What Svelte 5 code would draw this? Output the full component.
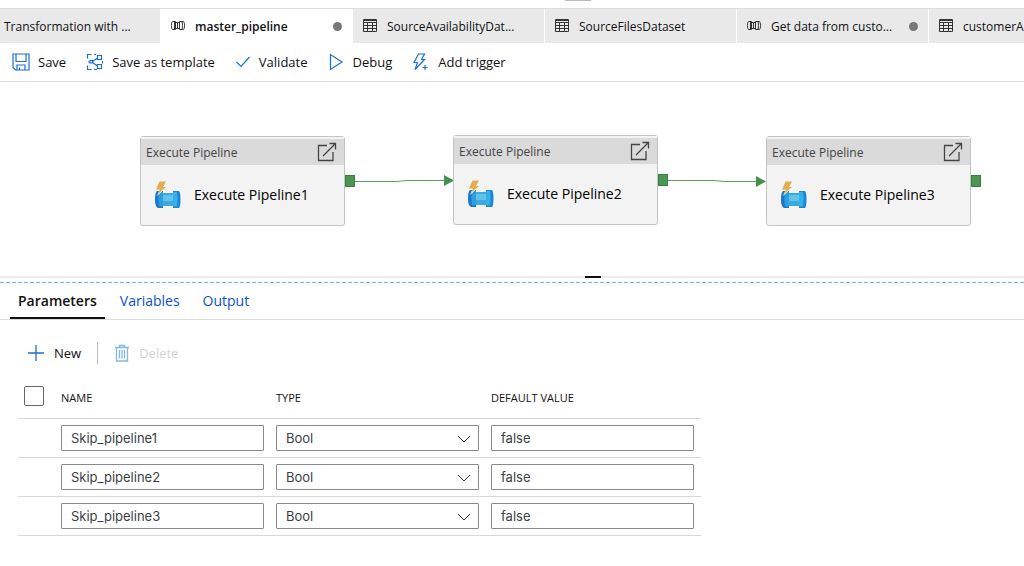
<script>
  const files = [
    { title: 'Transformation with ...', icon: '', dirty: false },
    { title: 'master_pipeline', icon: 'pipeline', dirty: true },
    { title: 'SourceAvailabilityDat...', icon: 'dataset', dirty: false },
    { title: 'SourceFilesDataset', icon: 'dataset', dirty: false },
    { title: 'Get data from custo...', icon: 'pipeline', dirty: true },
    { title: 'customerA', icon: 'dataset', dirty: false },
  ];

  const nodes = [
    { name: 'Execute Pipeline1', x: 140, y: 54 },
    { name: 'Execute Pipeline2', x: 453, y: 53 },
    { name: 'Execute Pipeline3', x: 766, y: 54 },
  ];

  const panels = ['Parameters', 'Variables', 'Output'];
  const types = ['Bool', 'String', 'Int', 'Float', 'Array', 'Object'];

  let activeFile = $state(1);
  let activePanel = $state('Parameters');
  let allChecked = $state(false);
  let params = $state([
    { name: 'Skip_pipeline1', type: 'Bool', value: 'false' },
    { name: 'Skip_pipeline2', type: 'Bool', value: 'false' },
    { name: 'Skip_pipeline3', type: 'Bool', value: 'false' },
  ]);

  function addParam() {
    params.push({ name: '', type: 'String', value: '' });
  }
</script>

<div class="page">
  <div class="top"><span class="grip"></span></div>

  <div class="files" role="tablist" aria-label="Open files">
    {#each files as file, i}
      <button
        class="file"
        class:file--active={activeFile === i}
        class:file--plain={!file.icon}
        role="tab"
        aria-selected={activeFile === i}
        onclick={() => (activeFile = i)}
      >
        {#if file.icon === 'pipeline'}
          <svg class="file__icon" width="16" height="16" viewBox="0 0 16 16">
            <path d="M3 3.500h2.500v8H3C1.800 11.500 1.500 10 1.500 7.500s.3-4 1.500-4zM4.500 3.500v8M5.500 4.500h2v6h-2M9.500 4.500h-2v6h2M9.500 3.500H13c1.200 0 1.500 1.500 1.500 4s-.3 4-1.500 4H9.500zM12 3.500c.6 1 .6 7 0 8" />
          </svg>
        {:else if file.icon === 'dataset'}
          <svg class="file__icon" width="16" height="16" viewBox="0 0 16 16">
            <path d="M1.500 1.500h13v12h-13zM1.500 2.500h13M1.500 4.500h13M1.500 7.500h13M1.500 10.500h13M5.500 4.500v9M10.500 4.500v9" />
          </svg>
        {/if}
        <span class="file__title">{file.title}</span>
        {#if file.dirty}<span class="file__dot"></span>{/if}
      </button>
    {/each}
  </div>

  <div class="toolbar">
    <button class="tool">
      <svg width="18" height="18" viewBox="0 0 18 18">
        <path d="M1 1h16v16H3.500L1 14.500zM4 1v7.500h10V1M5 17v-5h8v5M7.500 17v-2.500" />
      </svg>
      Save
    </button>
    <button class="tool">
      <svg width="18" height="18" viewBox="0 0 18 18">
        <path d="M1.500 5.500v-4h4M8 1.500h2M1.500 12.500v4h4M8 16.500h3M16.500 8v2.500M4 9H2M6.500 8.500l5-3.500M6.500 9.500l5 3.500M11.500 2.500h4v4h-4zM11.500 11.500h4v4h-4zM4 7.500h2.500v2.500H4z" />
      </svg>
      Save as template
    </button>
    <button class="tool">
      <svg width="16" height="18" viewBox="0 0 16 18"><path d="M1.500 9l4.500 4.500L14.500 4" /></svg>
      Validate
    </button>
    <button class="tool tool--debug">
      <svg width="16" height="18" viewBox="0 0 16 18"><path d="M2.500 1.500v15L14 9z" /></svg>
      Debug
    </button>
    <button class="tool">
      <svg width="18" height="18" viewBox="0 0 18 18">
        <path d="M6.500 1h6L9.500 6.500h3L3 16.500l2.500-7H2zM13 12v5M10.500 14.500h5" />
      </svg>
      Add trigger
    </button>
  </div>

  <div class="canvas">
    <svg class="edges" width="1024" height="190" viewBox="0 0 1024 190">
      <path class="edge" d="M354 99.500h43l10-1h37M668 98.500h46l10 1h34" />
      <path class="arrow" d="M444 93l10 5.500-10 5.500zM756 94l10 5.500-10 5.500z" />
    </svg>
    {#each nodes as node}
      <div class="node" style="left: {node.x}px; top: {node.y}px">
        <div class="node__head">
          <span>Execute Pipeline</span>
          <button class="node__open" aria-label="Open {node.name}">
            <svg width="20" height="20" viewBox="0 0 20 20">
              <path d="M10 3.500H1.500v15h14.500V10M6 14L18 2M12.500 1.500h6v6" />
            </svg>
          </button>
        </div>
        <div class="node__body">
          <svg width="28" height="28" viewBox="0 0 28 28">
            <path fill="#3fa9dc" d="M8 13h12v13H8z" />
            <path fill="#62c3ea" d="M8 15h12v6H8z" />
            <path fill="#1a78cc" d="M3 11h6v17H4Q1 27 1 19.500T3 11z" />
            <path fill="#2b9fe0" d="M5 12h4v14.500H5Q3.500 19 5 12z" />
            <path fill="#1a86d4" d="M19 11h6q1.500 1.500 1.500 8.500t-1.500 8.500h-6z" />
            <path fill="#35b0ea" d="M19 12h4q1.500 7 0 14.500h-4z" />
            <path fill="#f3f3f3" d="M5 1h8L10.500 6.500H13.500L3 16l2.500-5.500H1z" />
            <path fill="#e3ae50" d="M5.500 1.500H12L9 7h3L3 15l3-5.500H2z" />
          </svg>
          <span>{node.name}</span>
        </div>
        <span class="node__port"></span>
      </div>
    {/each}
  </div>

  <div class="splitter"><span class="splitter__grip"></span></div>
  <div class="dashes"></div>

  <div class="panels" role="tablist" aria-label="Pipeline settings">
    {#each panels as panel}
      <button
        class="panel"
        class:panel--active={activePanel === panel}
        role="tab"
        aria-selected={activePanel === panel}
        onclick={() => (activePanel = panel)}
      >{panel}</button>
    {/each}
  </div>

  <div class="actions">
    <button class="action" onclick={addParam}>
      <svg width="18" height="18" viewBox="0 0 18 18"><path d="M9 1v16M1 9h16" /></svg>
      New
    </button>
    <span class="divider"></span>
    <button class="action action--off" disabled>
      <svg width="16" height="18" viewBox="0 0 16 18">
        <path d="M1 3.500h14M5.500 3.500v-2h5v2M2.500 3.500v13.500h11V3.500M5.500 6v8.500M8 6v8.500M10.500 6v8.500" />
      </svg>
      Delete
    </button>
  </div>

  <table>
    <thead>
      <tr>
        <th class="check"><input type="checkbox" aria-label="Select all" bind:checked={allChecked} /></th>
        <th class="wide">NAME</th>
        <th class="wide">TYPE</th>
        <th>DEFAULT VALUE</th>
      </tr>
    </thead>
    <tbody>
      {#each params as param}
        <tr>
          <td></td>
          <td><input class="field" type="text" aria-label="Name" bind:value={param.name} /></td>
          <td>
            <div class="pick">
              <select class="field" aria-label="Type" bind:value={param.type}>
                {#each types as type}
                  <option>{type}</option>
                {/each}
              </select>
              <svg width="14" height="8" viewBox="0 0 14 8"><path d="M1 1l6 6 6-6" /></svg>
            </div>
          </td>
          <td><input class="field" type="text" aria-label="Default value" bind:value={param.value} /></td>
        </tr>
      {/each}
    </tbody>
  </table>
</div>

<style>
:global(body) {
  background: #fff;
}

.page {
  overflow: hidden;
  font-family: "Open Sans", "Noto Sans", sans-serif;
  font-size: 13px;
  color: #111;
}

button {
  margin: 0;
  padding: 0;
  border: 0;
  background: none;
  font: inherit;
  color: inherit;
  white-space: nowrap;
}

svg {
  flex: none;
  fill: none;
}

.top {
  display: flex;
  justify-content: center;
  height: 8px;
  padding-left: 132px;
}

.grip {
  width: 26px;
  height: 1px;
  background: #bbb;
}

/* open files */
.files {
  display: flex;
  height: 34px;
  border-top: 1px solid #dcdcdc;
}

.file {
  display: flex;
  flex: none;
  align-items: center;
  box-sizing: border-box;
  width: 192px;
  padding: 0 10px 0 9px;
  border-right: 1px solid #fff;
  background: #e9e9e9;
  font-size: 12px;
}

.file--plain {
  width: 161px;
  padding-left: 4px;
}

.file--active {
  background: #fff;
  font-weight: 600;
}

.file__icon {
  margin-right: 9px;
  stroke: #333;
}

.file__title {
  flex: 1;
  text-align: left;
}

.file__dot {
  width: 9px;
  height: 9px;
  border-radius: 50%;
  background: #777;
}

/* toolbar */
.toolbar {
  display: flex;
  gap: 20px;
  height: 38px;
  padding-left: 12px;
  border-bottom: 1px solid #dcdcdc;
}

.tool {
  display: flex;
  align-items: center;
  gap: 8px;
}

.tool--debug {
  gap: 9px;
}

.tool svg {
  stroke: #1b6fd0;
  stroke-width: 1.2;
}

/* canvas */
.canvas {
  position: relative;
  height: 194px;
}

.edges {
  position: absolute;
  left: 0;
  top: 0;
}

.edge {
  stroke: #5c9f63;
}

.arrow {
  fill: #468f4e;
}

.node {
  position: absolute;
  box-sizing: border-box;
  width: 205px;
  height: 90px;
  border: 1px solid #c4c4c4;
  border-radius: 3px;
  background: #f3f3f3;
}

.node__head {
  display: flex;
  align-items: center;
  justify-content: space-between;
  height: 26px;
  padding: 0 7px 0 5px;
  border-top: 2px solid #f3f3f3;
  background: #dadada;
  font-size: 12px;
  color: #444;
}

.node__open {
  display: flex;
}

.node__open svg {
  stroke: #444;
  stroke-width: 1.3;
}

.node__body {
  display: flex;
  align-items: center;
  gap: 12px;
  height: 58px;
  padding-left: 13px;
  font-size: 14px;
  color: #000;
}

.node__port {
  position: absolute;
  left: 204px;
  top: 38px;
  box-sizing: border-box;
  width: 10px;
  height: 12px;
  border: 1px solid #37823f;
  background: #4f9457;
}

/* splitter */
.splitter {
  display: flex;
  justify-content: center;
  height: 6px;
  padding-left: 162px;
  background: linear-gradient(#ececec 2px, #fff 2px);
}

.splitter__grip {
  width: 16px;
  height: 2px;
  background: #111;
}

.dashes {
  height: 1px;
  background: repeating-linear-gradient(90deg, #5cbfe6 0 4px, #fff 4px 6px);
}

/* settings tabs */
.panels {
  display: flex;
  gap: 7px;
  height: 36px;
  padding-left: 10px;
  border-bottom: 1px solid #dcdcdc;
}

.panel {
  padding: 0 8px;
  border-bottom: 2px solid transparent;
  font-size: 14px;
  color: #0b4fd0;
}

.panel--active {
  border-bottom-color: #111;
  font-weight: 600;
  color: #111;
}

.actions {
  display: flex;
  align-items: center;
  gap: 16px;
  padding: 22px 0 0 27px;
}

.action {
  display: flex;
  align-items: center;
  gap: 9px;
  height: 22px;
}

.action svg {
  stroke: #1b6fd0;
  stroke-width: 1.3;
}

.action--off {
  color: #d2d2d2;
}

.action--off svg {
  stroke: #82b8ea;
}

.divider {
  width: 1px;
  height: 22px;
  background: #bbb;
}

/* parameters */
table {
  width: 683px;
  max-width: 100%;
  margin-left: 18px;
  border-collapse: collapse;
  table-layout: fixed;
}

tr {
  border-bottom: 1px solid #d8d8d8;
}

th {
  height: 54px;
  padding: 0;
  font-size: 11px;
  font-weight: 400;
  text-align: left;
  vertical-align: bottom;
  line-height: 40px;
}

td {
  height: 38px;
  padding: 0;
}

.check {
  width: 43px;
}

.wide {
  width: 215px;
}

th input {
  appearance: none;
  display: block;
  box-sizing: border-box;
  width: 20px;
  height: 20px;
  margin: 0 0 12px 6px;
  border: 1px solid #666;
  border-radius: 2px;
}

th input:checked {
  background: #1b6fd0;
}

.field {
  appearance: none;
  display: block;
  box-sizing: border-box;
  width: 203px;
  height: 26px;
  padding: 0 9px;
  border: 1px solid #8a8a8a;
  border-radius: 1px;
  background: #fff;
  font-family: Inter, sans-serif;
  font-size: 13px;
  color: #3b3f45;
}

.pick {
  position: relative;
  width: 203px;
}

.pick svg {
  position: absolute;
  right: 8px;
  top: 10px;
  stroke: #333;
  pointer-events: none;
}
</style>
